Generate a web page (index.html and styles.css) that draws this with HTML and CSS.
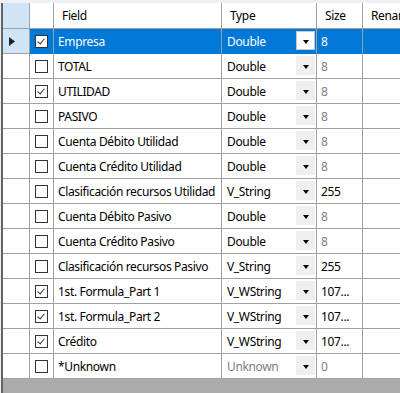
FILE: index.html
```html
<!DOCTYPE html>
<html lang="es">
<head>
    <meta charset="UTF-8">
    <title>Fields</title>
    <link rel="stylesheet" href="styles.css">
</head>
<body>
    <div class="grid">
        <div class="row head">
            <div class="cell rh corner"></div>
            <div class="cell"></div>
            <div class="cell hd">Field</div>
            <div class="cell hd">Type</div>
            <div class="cell hd">Size</div>
            <div class="cell hd">Rename</div>
        </div>

        <div class="row selected">
            <div class="cell rh"><svg width="6" height="9" viewBox="0 0 6 9"><polygon points="0,0 6,4.5 0,9" fill="#222"/></svg></div>
            <div class="cell chk"><span class="box on"></span></div>
            <div class="cell">Empresa</div>
            <div class="cell type">Double<span class="drop"></span></div>
            <div class="cell size ro">8</div>
            <div class="cell"></div>
        </div>
        <div class="row">
            <div class="cell rh"></div>
            <div class="cell chk"><span class="box"></span></div>
            <div class="cell">TOTAL</div>
            <div class="cell type">Double<span class="drop"></span></div>
            <div class="cell size ro">8</div>
            <div class="cell"></div>
        </div>
        <div class="row">
            <div class="cell rh"></div>
            <div class="cell chk"><span class="box on"></span></div>
            <div class="cell">UTILIDAD</div>
            <div class="cell type">Double<span class="drop"></span></div>
            <div class="cell size ro">8</div>
            <div class="cell"></div>
        </div>
        <div class="row">
            <div class="cell rh"></div>
            <div class="cell chk"><span class="box"></span></div>
            <div class="cell">PASIVO</div>
            <div class="cell type">Double<span class="drop"></span></div>
            <div class="cell size ro">8</div>
            <div class="cell"></div>
        </div>
        <div class="row">
            <div class="cell rh"></div>
            <div class="cell chk"><span class="box"></span></div>
            <div class="cell">Cuenta Débito Utilidad</div>
            <div class="cell type">Double<span class="drop"></span></div>
            <div class="cell size ro">8</div>
            <div class="cell"></div>
        </div>
        <div class="row">
            <div class="cell rh"></div>
            <div class="cell chk"><span class="box"></span></div>
            <div class="cell">Cuenta Crédito Utilidad</div>
            <div class="cell type">Double<span class="drop"></span></div>
            <div class="cell size ro">8</div>
            <div class="cell"></div>
        </div>
        <div class="row">
            <div class="cell rh"></div>
            <div class="cell chk"><span class="box"></span></div>
            <div class="cell">Clasificación recursos Utilidad</div>
            <div class="cell type">V_String<span class="drop"></span></div>
            <div class="cell size">255</div>
            <div class="cell"></div>
        </div>
        <div class="row">
            <div class="cell rh"></div>
            <div class="cell chk"><span class="box"></span></div>
            <div class="cell">Cuenta Débito Pasivo</div>
            <div class="cell type">Double<span class="drop"></span></div>
            <div class="cell size ro">8</div>
            <div class="cell"></div>
        </div>
        <div class="row">
            <div class="cell rh"></div>
            <div class="cell chk"><span class="box"></span></div>
            <div class="cell">Cuenta Crédito Pasivo</div>
            <div class="cell type">Double<span class="drop"></span></div>
            <div class="cell size ro">8</div>
            <div class="cell"></div>
        </div>
        <div class="row">
            <div class="cell rh"></div>
            <div class="cell chk"><span class="box"></span></div>
            <div class="cell">Clasificación recursos Pasivo</div>
            <div class="cell type">V_String<span class="drop"></span></div>
            <div class="cell size">255</div>
            <div class="cell"></div>
        </div>
        <div class="row">
            <div class="cell rh"></div>
            <div class="cell chk"><span class="box on"></span></div>
            <div class="cell">1st. Formula_Part 1</div>
            <div class="cell type">V_WString<span class="drop"></span></div>
            <div class="cell size">107...</div>
            <div class="cell"></div>
        </div>
        <div class="row">
            <div class="cell rh"></div>
            <div class="cell chk"><span class="box on"></span></div>
            <div class="cell">1st. Formula_Part 2</div>
            <div class="cell type">V_WString<span class="drop"></span></div>
            <div class="cell size">107...</div>
            <div class="cell"></div>
        </div>
        <div class="row">
            <div class="cell rh"></div>
            <div class="cell chk"><span class="box on"></span></div>
            <div class="cell">Crédito</div>
            <div class="cell type">V_WString<span class="drop"></span></div>
            <div class="cell size">107...</div>
            <div class="cell"></div>
        </div>
        <div class="row">
            <div class="cell rh"></div>
            <div class="cell chk"><span class="box"></span></div>
            <div class="cell">*Unknown</div>
            <div class="cell type ro">Unknown<span class="drop"></span></div>
            <div class="cell size ro">0</div>
            <div class="cell"></div>
        </div>

        <div class="empty"></div>
    </div>
</body>
</html>
```

FILE: styles.css
```css
html, body {
    margin: 0;
    height: 100%;
}

body {
    background: #f0f0f0;
    padding: 3px 0 0 1px;
    box-sizing: border-box;
    overflow: hidden;
    font-family: "Segoe UI", "Noto Sans", sans-serif;
    font-size: 12px;
    letter-spacing: -0.35px;
    color: #000;
}

.grid {
    height: 100%;
    border-left: 2px solid #646464;
    background: #ababab;
    display: flex;
    flex-direction: column;
}

.row {
    display: grid;
    grid-template-columns: 27px 24px 168px 95px 46px 80px;
    height: 25px;
    background: #fff;
}

.row.head {
    height: 26px;
}

.cell {
    box-sizing: border-box;
    border-right: 1px solid #a0a0a0;
    border-bottom: 1px solid #a0a0a0;
    padding: 0 0 0 4px;
    display: flex;
    align-items: center;
    white-space: nowrap;
    overflow: hidden;
    position: relative;
}

.hd {
    padding-left: 8px;
}

.rh {
    padding: 0 0 0 6px;
}

.corner,
.selected .rh {
    background: #d0e4f7;
}

.selected .cell:not(.rh) {
    background: #0078d7;
    color: #fff;
    border-bottom-color: #0078d7;
}

.chk {
    padding: 0;
    justify-content: center;
}

.box {
    width: 13px;
    height: 13px;
    box-sizing: border-box;
    border: 1px solid #333;
    background: #fff;
    position: relative;
}

.box.on::after {
    content: "";
    position: absolute;
    left: 3px;
    top: 1px;
    width: 3px;
    height: 6px;
    border: solid #333;
    border-width: 0 1px 1px 0;
    transform: rotate(40deg);
}

.type {
    padding-left: 5px;
}

.drop {
    position: absolute;
    right: 1px;
    top: 2px;
    bottom: 3px;
    width: 19px;
    background: #efefef;
}

.drop::after {
    content: "";
    position: absolute;
    left: 7px;
    top: 9px;
    border-style: solid;
    border-width: 4px 3.5px 0;
    border-color: #000 transparent transparent;
}

.selected .drop {
    background: #fff;
    border: 1px solid #c8c8c8;
    box-sizing: border-box;
}

.selected .drop::after {
    left: 6px;
    top: 8px;
}

.ro {
    color: #808080;
}

.selected .ro {
    color: #e8f0ff;
}

.empty {
    flex: 1;
    background: #ababab;
}
```
